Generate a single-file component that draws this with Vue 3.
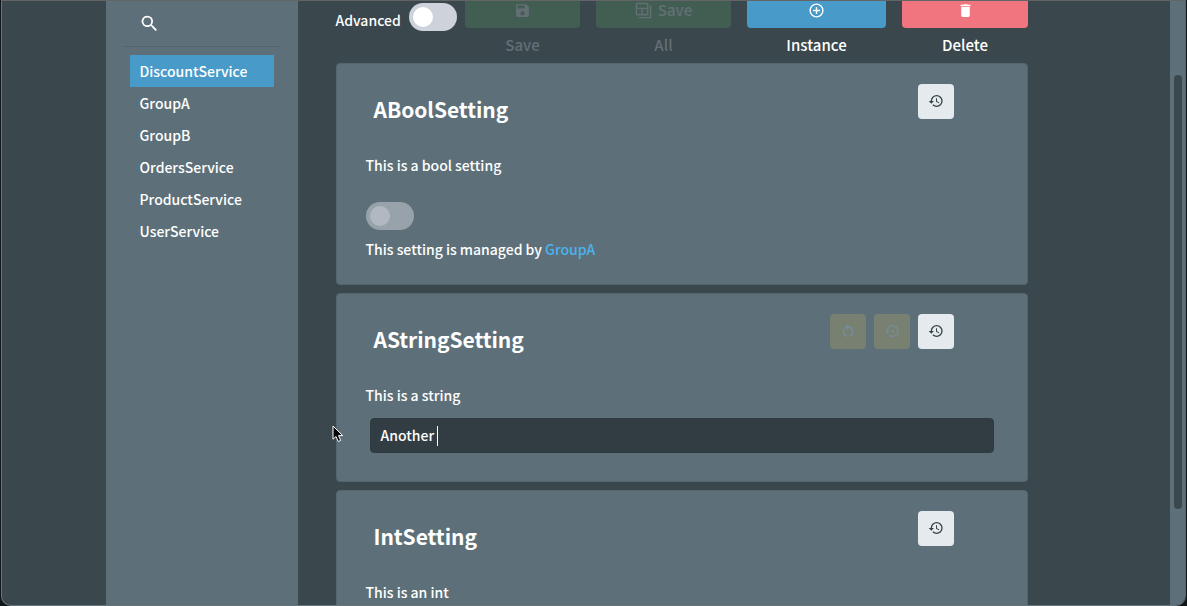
<script setup>
import { ref } from 'vue'

const services = ['DiscountService', 'GroupA', 'GroupB', 'OrdersService', 'ProductService', 'UserService']
const selected = ref('DiscountService')
const text = ref('Another')

const historyPath =
  'M13.5 8H12v5l4.28 2.54l.72-1.21l-3.5-2.08zM13 3a9 9 0 0 0-9 9H1l3.96 4.03L9 12H6a7 7 0 0 1 7-7a7 7 0 0 1 7 7a7 7 0 0 1-7 7c-1.93 0-3.68-.79-4.94-2.06l-1.42 1.42A8.9 8.9 0 0 0 13 21a9 9 0 0 0 9-9a9 9 0 0 0-9-9'
const restorePath =
  'M15 12a2 2 0 1 0-4 0a2 2 0 1 0 4 0M13 3a9 9 0 0 0-9 9H1l4 4l4-4H6a7 7 0 1 1 7 7a6.96 6.96 0 0 1-4.06-1.3l-1.42 1.44A9 9 0 1 0 13 3'
const resetPath =
  'M12 4V1L7 6l5 5V7c3.3 0 6 2.7 6 6c0 2.97-2.16 5.43-5 5.91v2.02c3.95-.49 7-3.85 7-7.93c0-4.42-3.58-9-8-9M6 13c0-1.65.67-3.15 1.76-4.24L6.34 7.34A8 8 0 0 0 4 13c0 4.08 3.05 7.44 7 7.93v-2.02c-2.83-.48-5-2.94-5-5.91'

const actions = [
  { label: 'Save', cls: 'save', disabled: true, icon: 'M17 3H5a2 2 0 0 0-2 2v14a2 2 0 0 0 2 2h14a2 2 0 0 0 2-2V7zm-5 16a3 3 0 1 1 0-6a3 3 0 0 1 0 6m3-10H5V5h10z' },
  { label: 'All', side: 'Save', cls: 'all', disabled: true, icon: 'M17 1H3a2 2 0 0 0-2 2v14a2 2 0 0 0 2 2h14a2 2 0 0 0 2-2V3a2 2 0 0 0-2-2M3 3h14v5H3zm0 7h6v7H3zm8 7v-7h6v7zM21 5h2v16a2 2 0 0 1-2 2H5v-2h16z' },
  { label: 'Instance', cls: 'instance', icon: 'M12 20a8 8 0 1 1 0-16a8 8 0 0 1 0 16m0-18a10 10 0 1 0 0 20a10 10 0 0 0 0-20m1 5h-2v4H7v2h4v4h2v-4h4v-2h-4z' },
  { label: 'Delete', cls: 'delete', icon: 'M19 4h-3.5l-1-1h-5l-1 1H5v2h14M6 19a2 2 0 0 0 2 2h8a2 2 0 0 0 2-2V7H6z' },
]

const cards = [
  { title: 'ABoolSetting', desc: 'This is a bool setting', kind: 'bool', tools: [] },
  { title: 'AStringSetting', desc: 'This is a string', kind: 'string', tools: [resetPath, restorePath] },
  { title: 'IntSetting', desc: 'This is an int', kind: 'int', tools: [] },
]
</script>

<template>
  <div class="backdrop">
    <div class="window">
      <aside class="sidebar">
        <div class="search">
          <svg viewBox="0 0 24 24"><path d="M9.5 3A6.5 6.5 0 0 1 16 9.5c0 1.61-.59 3.09-1.56 4.23l.27.27h.79l5 5l-1.5 1.5l-5-5v-.79l-.27-.27A6.5 6.5 0 1 1 9.5 3m0 2a4.5 4.5 0 1 0 0 9a4.5 4.5 0 0 0 0-9" /></svg>
        </div>
        <nav>
          <a v-for="s in services" :key="s" :class="{ active: s === selected }" @click="selected = s"><span>{{ s }}</span></a>
        </nav>
      </aside>

      <main class="content">
        <header class="toolbar">
          <span class="advanced">Advanced</span>
          <span class="switch"><i></i></span>
          <div v-for="a in actions" :key="a.label" class="action" :class="[a.cls, { disabled: a.disabled }]">
            <button>
              <svg viewBox="0 0 24 24"><path :d="a.icon" /></svg>
              <span v-if="a.side">{{ a.side }}</span>
            </button>
            <span class="caption">{{ a.label }}</span>
          </div>
        </header>

        <section v-for="c in cards" :key="c.title" class="card" :class="c.kind">
          <div class="head">
            <h2>{{ c.title }}</h2>
            <div class="tools">
              <button v-for="(t, i) in c.tools" :key="i" class="tool muted">
                <svg viewBox="0 0 24 24"><path :d="t" /></svg>
              </button>
              <button class="tool">
                <svg viewBox="0 0 24 24"><path :d="historyPath" /></svg>
              </button>
            </div>
          </div>
          <p class="desc">{{ c.desc }}</p>
          <template v-if="c.kind === 'bool'">
            <span class="switch locked"><i></i></span>
            <p class="managed">This setting is managed by <a>GroupA</a></p>
          </template>
          <div v-if="c.kind === 'string'" class="field"><span>{{ text }}</span><i class="caret"></i></div>
        </section>
      </main>

      <div class="scrollbar"><i></i></div>
    </div>
    <svg class="pointer" viewBox="0 0 12 18"><path d="M1 1V14.2L4 11.5L6.2 16.5L8.7 15.4L6.5 10.6H10.7Z" /></svg>
  </div>
</template>

<style>
html, body { margin: 0; overflow: hidden; background: #000; }
</style>

<style scoped>
* { box-sizing: border-box; }
.backdrop {
  position: relative;
  width: 1187px;
  height: 606px;
  padding: 0 1px;
  overflow: hidden;
  background: #111718;
  color: #fff;
  font: 500 14px/24px "Noto Sans CJK SC", "Noto Sans", sans-serif;
}
.window {
  display: flex;
  height: 606px;
  overflow: hidden;
  background: #3a474d;
  border: 1px solid #65757b;
  border-top-color: #636466;
  border-right-color: #53646b;
  border-radius: 0 0 10px 10px;
}
.sidebar { width: 192px; margin-left: 104px; padding: 0 18px 0 16px; background: #5d7079; flex: none; }
.search { height: 46px; padding: 11.5px 0 0 17px; border-bottom: 1px solid #53666e; }
.search svg { display: block; width: 21px; height: 21px; fill: #fff; }
nav { margin: 8px 6px 0 8px; }
nav a { display: flex; align-items: center; height: 32px; padding: 0 0 1px 9.5px; }
nav a.active { background: #489bc9; }
.content { width: 692px; margin-left: 38px; flex: none; }
.toolbar { display: flex; height: 62px; align-items: flex-start; }
.advanced { width: 73px; margin: 7px 0 0 -0.5px; }
.switch { display: block; width: 48px; height: 28px; padding: 4px; border-radius: 14px; background: #ced2da; flex: none; }
.switch i { display: block; width: 20px; height: 20px; border-radius: 50%; background: #fff; }
.toolbar .switch { margin: 2px 8px 0 0.5px; }
.action { display: flex; flex-direction: column; align-items: center; margin-right: 16px; flex: none; font-size: 15px; }
.action:last-child { margin-right: 0; }
.action button {
  display: flex;
  align-items: center;
  justify-content: center;
  gap: 6px;
  width: 100%;
  height: 35px;
  margin: -8px 0 0;
  padding: 0;
  border: 0;
  border-radius: 4px;
  color: inherit;
  font: inherit;
}
.action svg { width: 17px; height: 17px; fill: currentColor; }
.action button span { margin-top: -2px; }
.save { width: 115px; }
.all { width: 135px; }
.instance { width: 139px; }
.delete { width: 126px; }
.disabled { color: #636f75; }
.disabled button { background: #425e53; }
.instance button { background: #489bc9; }
.delete button { background: #f1757e; }
.caption { margin-top: 5px; }
.card { height: 222px; margin-bottom: 8px; padding: 20px 33px 0 29px; background: #5d7079; border: 1px solid #53666e; border-radius: 4px; }
.card.string { height: 189px; }
.head { display: flex; justify-content: space-between; height: 69px; }
h2 { margin: 8px 0 0 7.5px; font-size: 21px; line-height: 34px; font-weight: 700; letter-spacing: -0.05px; }
.tools { display: flex; gap: 8px; margin-right: 40px; }
.tool { display: flex; align-items: center; justify-content: center; width: 36px; height: 35px; padding: 0 1px 1px 0; border: 0; border-radius: 4px; background: #e5eaef; color: #36444a; }
.tool svg { width: 16px; height: 16px; fill: currentColor; }
.muted { background: #778071; color: #748d9b; }
p { margin: 0 0 0 -0.5px; }
.locked { margin-top: 25px; background: #98a2aa; }
.locked i { background: #b1b8c0; }
.managed { margin-top: 7px; }
.managed a { color: #4bb3ee; }
.field { display: flex; align-items: center; height: 35px; margin: 11px 0 0 4px; padding-left: 9.5px; border: 1px solid #303b41; border-radius: 4px; background: #323d43; }
.field span { margin-top: -2px; }
.caret { width: 1px; height: 20px; margin-left: 3px; background: #fff; }
.scrollbar { width: 15px; margin-left: auto; padding: 74px 3px 0 4px; background: #5d7079; flex: none; }
.scrollbar i { display: block; height: 434px; border-radius: 4px; background: #3a474d; }
.pointer { position: absolute; left: 332px; top: 425px; width: 12px; height: 18px; fill: #050505; stroke: #fff; stroke-width: 1; }
</style>
